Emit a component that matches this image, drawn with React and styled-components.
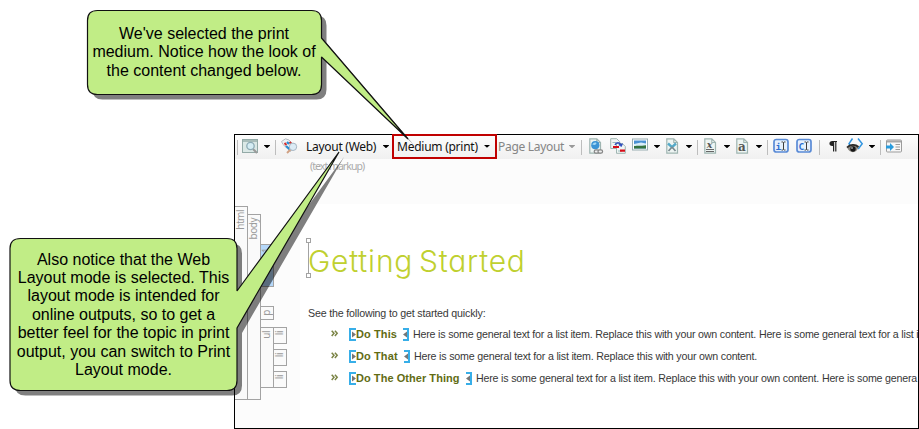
import React from "react";
import styled, { createGlobalStyle } from "styled-components";

const Global = createGlobalStyle`
  *{box-sizing:border-box}
  html,body{margin:0;padding:0;background:#fff;overflow:hidden}
`;

const Stage = styled.main`
  position: relative;
  width: 919px;
  height: 429px;
  padding: 134px 0 0 234px;
  overflow: hidden;
`;
const Editor = styled.section`
  display: flex;
  flex-direction: column;
  width: 685px;
  height: 295px;
  border: 1px solid #000;
  background: #fcfcfc;
`;
const Toolbar = styled.header`
  display: flex;
  align-items: center;
  flex: none;
  height: 24px;
  background: linear-gradient(#fdfdfd, #f0f0f0);
  font: 12px "Noto Sans", "Open Sans", sans-serif;
  color: #111;
`;
const Slot = styled.span`
  display: flex;
  flex: none;
  align-items: center;
  margin-left: ${(p) => p.$gap || 0}px;
  width: ${(p) => p.$w}px;
  height: 18px;
  padding-bottom: 2px;
  white-space: nowrap;
`;
const Label = styled(Slot)`
  height: 20px;
  padding-bottom: ${(p) => p.$drop ?? 2}px;
  letter-spacing: ${(p) => p.$track || 0}px;
  color: ${(p) => (p.$muted ? "#858585" : "#111")};
`;
const Separator = styled.i`
  flex: none;
  width: 1px;
  height: 15px;
  margin-left: ${(p) => p.$gap}px;
  background: #bdbdbd;
`;
const Caret = styled.i`
  flex: none;
  width: 6px;
  height: 3px;
  margin: -1px -1px 0 ${(p) => p.$gap}px;
  background: ${(p) => (p.$muted ? "#999" : "#000")};
  clip-path: polygon(0 0, 100% 0, 100% 20%, 55% 100%, 45% 100%, 0 20%);
`;
const Highlighted = styled.span`
  display: flex;
  flex: none;
  align-items: center;
  align-self: flex-start;
  width: 105px;
  height: 25px;
  margin: -1px 0 0 4px;
  padding-left: 3px;
  border: 2px solid #c00000;
`;
const Workspace = styled.div`
  display: flex;
  flex: 1;
  min-height: 0;
`;
const Gutter = styled.aside`
  display: flex;
  flex: none;
  align-items: flex-start;
  width: 65px;
  padding-top: 47px;
  font: 10px "Noto Sans", "Open Sans", sans-serif;
  letter-spacing: -0.5px;
  color: #999;
`;
const Tag = styled.div`
  display: flex;
  flex: none;
  justify-content: flex-start;
  width: ${(p) => p.$w || 14}px;
  height: ${(p) => p.$h}px;
  margin-top: ${(p) => p.$top || 0}px;
  margin-left: ${(p) => (p.$first ? 0 : -1)}px;
  padding-top: ${(p) => p.$pad ?? 3}px;
  border: 1px solid #a3a3a3;
  border-left-width: ${(p) => (p.$first ? 0 : 1)}px;
  background: ${(p) => (p.$active ? "#b5d8fa" : "#fafafa")};
  line-height: 11px;
  span {
    writing-mode: vertical-rl;
    transform: rotate(180deg);
    height: max-content;
  }
`;
const TagColumn = styled.div`
  display: flex;
  flex-direction: column;
  flex: none;
  padding-top: ${(p) => p.$top || 0}px;
`;
const TagRow = styled.div`
  display: flex;
  align-items: flex-start;
  margin-top: ${(p) => p.$top || 0}px;
`;
const Document = styled.div`
  display: flex;
  flex-direction: column;
  flex: 1;
  min-width: 0;
`;
const MarkupNote = styled.div`
  flex: none;
  height: 45px;
  padding: 0 0 0 10px;
  font: 10.5px/14px "Noto Sans", "Open Sans", sans-serif;
  letter-spacing: -0.95px;
  color: #aaa;
`;
const Page = styled.article`
  flex: 1;
  min-height: 0;
  overflow: hidden;
  padding: 33px 0 0 5px;
  background: #fff;
  font: 10.67px/22px "Liberation Sans", Arial, sans-serif;
  color: #383838;
`;
const TitleRow = styled.div`
  display: flex;
  height: 41px;
`;
const Title = styled.h1`
  margin: 0 0 0 -4px;
  font: 300 30px/48px Inter, sans-serif;
  font-feature-settings: "cv11", "ss03";
  letter-spacing: 0.8px;
  word-spacing: -3.5px;
  color: #bfd02f;
  white-space: nowrap;
`;
const Intro = styled.p`
  margin: 24px 0 0 3px;
  letter-spacing: -0.18px;
  white-space: nowrap;
`;
const List = styled.ul`
  margin: -1px 0 0;
  padding: 0 0 0 26px;
  list-style: none;
`;
const Item = styled.li`
  display: flex;
  align-items: center;
  height: 22px;
  white-space: nowrap;
`;
const Bullet = styled.span`
  display: flex;
  align-items: center;
  flex: none;
  width: 18px;
  height: 22px;
  padding-bottom: 2px;
`;
const Term = styled.b`
  flex: none;
  width: ${(p) => p.$w}px;
  font-size: 11px;
  letter-spacing: ${(p) => p.$track}px;
  color: #626c14;
`;
const Copy = styled.span`
  margin-left: 3px;
  letter-spacing: -0.195px;
`;
const Callout = styled.div`
  position: absolute;
  left: ${(p) => p.$x}px;
  top: ${(p) => p.$y}px;
  display: flex;
  flex-direction: column;
  align-items: center;
  width: ${(p) => p.$w}px;
  font: 16px/18.4px "Liberation Sans", Arial, sans-serif;
  color: #000;
  white-space: nowrap;
`;
const Shapes = styled.svg`
  position: absolute;
  inset: 0;
`;
const Glyph = styled.svg`
  display: block;
  flex: none;
  overflow: visible;
`;

const Icon = ({ w = 16, children }) => (
  <Glyph width={w} height="16" viewBox={`0 0 ${w} 16`} fill="none">
    {children}
  </Glyph>
);
const Sheet = () => (
  <path d="M.8.8h7l3.7 3.7v10.7H.8zM7.8.8v3.7h3.7" fill="#eef5f3" stroke="#9fb5b1" strokeWidth="1.2" />
);
const PreviewIcon = () => (
  <Icon>
    <rect x=".5" y="1.5" width="15" height="13" fill="#dbe8e6" stroke="#93aaa7" />
    <path d="M1 3h14" stroke="#a9bdba" strokeWidth="2" />
    <path d="m11 11 4 4" stroke="#9a9a9a" strokeWidth="2" />
    <circle cx="8.5" cy="8" r="3.7" fill="#d5edf4" stroke="#8eabb5" strokeWidth="1.3" />
  </Icon>
);
const TagSearchIcon = () => (
  <Icon>
    <path d="M.5 3.5 4.500.8 8 2l6 6-4.500 5.500L2 6.500z" fill="#edf1f4" stroke="#b7bdc3" />
    <path d="m3.500 5 2 2M8.500 4l2 2" stroke="#d42c2c" strokeWidth="2" />
    <path d="m6 4 2 2M5 8l4 3.500" stroke="#268bd2" strokeWidth="2.200" />
    <path d="m9.500 11.500-3.500 3.500" stroke="#d0a184" strokeWidth="2" />
    <circle cx="12" cy="8.800" r="3.700" fill="#dcebf5" stroke="#a6b6c3" />
  </Icon>
);
const LinkIcon = () => (
  <Icon w={14}>
    <Sheet />
    <circle cx="6.3" cy="7.2" r="4.1" fill="#3c94d5" />
    <path d="M3.3 6.5c1-2 3-2.6 4-1.6.6 1-.8 1.6-2 2.2z" fill="#a3d8f5" />
    <g stroke="#858585" strokeWidth="1.2" fill="#eee">
      <rect x="5.2" y="11.8" width="4.6" height="3.4" rx="1.7" />
      <rect x="9" y="11.8" width="4.6" height="3.4" rx="1.7" />
    </g>
  </Icon>
);
const CrossRefIcon = () => (
  <Icon>
    <path d="M.7.7h6l3 3v6.8h-9z" fill="#f1f6f5" stroke="#9fb5b1" />
    <path d="M6.5 5.5h5.8l3 3v6.8H6.5z" fill="#f1f6f5" stroke="#9fb5b1" />
    <path d="M2.5 4.5h4M8 13h4" stroke="#9bb" />
    <path d="M3 9h6M10 12.7h5" stroke="#d80d19" strokeWidth="2.2" />
    <path d="M5 7c1-3 5-3 6 0m-2.2-.5L11.2 8l1.3-2.5" stroke="#304fbd" strokeWidth="1.3" />
  </Icon>
);
const PictureIcon = () => (
  <Icon>
    <rect x=".5" y="1" width="15" height="11" fill="#fff" stroke="#9aaeb2" />
    <path d="M2 2.5h12v8H2z" fill="#4a91d3" />
    <path d="M2 6 9 4.5l5 1V8H2z" fill="#d8edf8" />
    <path d="M2 8c4-.5 6 0 12-.8v3.300H2z" fill="#35733f" />
  </Icon>
);
const SnippetIcon = () => (
  <Icon w={12}>
    <Sheet />
    <path d="m2 5.5 4 3.7 4-3.7" stroke="#54a9c8" strokeWidth="2.4" />
    <path d="m6 9-3.5 4M6 9l3.5 4" stroke="#7d8b90" strokeWidth="1.7" />
  </Icon>
);
const SheetLetterIcon = ({ letter, underlined }) => (
  <Icon w={12}>
    <Sheet />
    <text
      x={underlined ? 5.5 : 6} y={underlined ? 9.6 : 12.7} textAnchor="middle" fill="#555"
      fontFamily="DejaVu Serif, serif" fontWeight="bold"
      fontStyle={underlined ? "italic" : "normal"} fontSize={underlined ? 9.5 : 12}
    >
      {letter}
    </text>
    {underlined && <path d="M2 11.5h8M2 13.5h8" stroke="#666" />}
  </Icon>
);
const CursorIcon = ({ letter }) => (
  <Icon>
    <rect x="1" y="1.5" width="14" height="12.5" rx="2.3" fill="#e6f0fc" stroke="#5a8bd6" strokeWidth="1.7" />
    <text x="5.4" y="11.6" textAnchor="middle" fill="#2f6fd0" fontFamily="DejaVu Sans Mono, monospace" fontWeight="bold" fontSize="9.5">
      {letter}
    </text>
    <path d="M8.5 4h1.3l.7.5.7-.5h1.3m-2 .5v7m-2 .5h1.3l.7-.5.7.5h1.3" stroke="#3c3c3c" />
  </Icon>
);
const PilcrowIcon = () => (
  <Icon w={8}>
    <path d="M8 3H3.3C-.5 3-.5 8 3.3 8H4v5.500h1.200V4h1v9.500h1.200V4H8z" fill="#222" />
  </Icon>
);
const EyeIcon = () => (
  <Icon>
    <path d="M5.5.5 2 5.700l1.500 2M11 .5l4.200 5.200-4 5.300" stroke="#3195e0" strokeWidth="1.5" />
    <path d="M0 9.5c3-4 8.500-4 11.500-.5-2 7-9 6.500-11.500.5" fill="#8b8881" />
    <path d="M0 9.5c3-3.500 8.500-3.500 11.500-.5" stroke="#2b2926" strokeWidth="1.8" />
    <circle cx="6" cy="11" r="2.7" fill="#171717" />
    <circle cx="5" cy="10" r=".8" fill="#eee" />
  </Icon>
);
const PanelIcon = () => (
  <Icon>
    <rect x=".5" y="2" width="15" height="12" rx="1" fill="#f7f7f7" stroke="#9b9b9b" />
    <path d="M1 3.5h14" stroke="#a7a7a7" strokeWidth="2" />
    <path d="M0 7.500h4V5l4 4-4 4v-2.500H0z" fill="#289bdd" />
    <path d="M9.5 6.500H14M9.500 9H14M9.500 11.500H14" stroke="#999" />
  </Icon>
);
const TitleHandle = () => (
  <Glyph width="7" height="41" viewBox="0 0 7 41" fill="#fff" stroke="#a3a3a3">
    <path d="M3.5 4v33" />
    <rect x="1.5" y="1.5" width="4" height="4" />
    <rect x="1.5" y="36.5" width="4" height="4" />
  </Glyph>
);
const Bracket = ({ end }) => (
  <Glyph width="7" height="14" viewBox="0 0 7 14" fill="none">
    <path d={end ? "M0 2h5v11H0" : "M7 2H1v11h6"} stroke="#37aee8" strokeWidth="2" />
    <path d={end ? "M4 4.500v6L0 7.500z" : "M3 4.500v6l4-3z"} fill="#777" />
  </Glyph>
);
const BulletMark = () => (
  <Glyph width="7" height="7" viewBox="0 0 7 7" fill="none" stroke="#7b8445" strokeWidth="1.5">
    <path d="m.7.7 2.300 2.600L.7 6M3.900.7l2.300 2.600L3.900 6" />
  </Glyph>
);

const base = "Here is some general text for a list item. Replace this with your own content.";
const items = [
  { term: "Do This", w: 47, track: 0.1, text: `${base} Here is some general text for a list i` },
  { term: "Do That", w: 48, track: 0.1, text: base },
  { term: "Do The Other Thing", w: 110, track: 0.05, text: `${base} Here is some genera` },
];
const callouts = [
  {
    x: 87, y: 25, w: 234,
    path: "M97.5 10.5H311.5Q321.5 10.5 321.5 20.5V38L408 139 321.5 57V84.5Q321.5 94.5 311.5 94.5H97.5Q87.5 94.5 87.5 84.5V20.5Q87.5 10.5 97.5 10.5Z",
    lines: ["We've selected the print", "medium. Notice how the look of", "the content changed below."],
  },
  {
    x: 10, y: 250.5, w: 227,
    path: "M20.5 238.5H227Q237 238.5 237 248.5V291L339 152 237 328V380.5Q237 390.5 227 390.5H20.5Q10 390.5 10 380.5V248.5Q10 238.5 20.5 238.5Z",
    lines: [
      "Also notice that the Web", "Layout mode is selected. This", "layout mode is intended for",
      "online outputs, so to get a", "better feel for the topic in print", "output, you can switch to Print",
      "Layout mode.",
    ],
  },
];

export default function App() {
  return (
    <Stage>
      <Global />
      <Editor>
        <Toolbar>
          <Separator $gap={2} />
          <Slot $gap={4} $w={16}><PreviewIcon /></Slot>
          <Caret $gap={6} />
          <Separator $gap={6} />
          <Slot $gap={5} $w={16}><TagSearchIcon /></Slot>
          <Label $gap={9} $w={71} $track={-0.28}>Layout (Web)</Label>
          <Caret $gap={6} />
          <Highlighted>
            <Label $w={82} $track={-0.25} $drop={0}>Medium (print)</Label>
            <Caret $gap={5} />
          </Highlighted>
          <Label $gap={1} $w={66} $track={-0.3} $muted>Page Layout</Label>
          <Caret $gap={5} $muted />
          <Separator $gap={7} />
          <Slot $gap={7} $w={14}><LinkIcon /></Slot>
          <Slot $gap={7} $w={16}><CrossRefIcon /></Slot>
          <Slot $gap={6} $w={16}><PictureIcon /></Slot>
          <Caret $gap={6} />
          <Slot $gap={7} $w={12}><SnippetIcon /></Slot>
          <Caret $gap={8} />
          <Separator $gap={6} />
          <Slot $gap={6} $w={12}><SheetLetterIcon letter="x" underlined /></Slot>
          <Caret $gap={8} />
          <Slot $gap={7} $w={12}><SheetLetterIcon letter="a" /></Slot>
          <Caret $gap={8} />
          <Separator $gap={6} />
          <Slot $gap={5} $w={16}><CursorIcon letter="i" /></Slot>
          <Slot $gap={7} $w={16}><CursorIcon letter="C" /></Slot>
          <Separator $gap={7} />
          <Slot $gap={9} $w={8}><PilcrowIcon /></Slot>
          <Slot $gap={10} $w={16}><EyeIcon /></Slot>
          <Caret $gap={6} />
          <Separator $gap={6} />
          <Slot $gap={5} $w={16}><PanelIcon /></Slot>
        </Toolbar>
        <Workspace>
          <Gutter>
            <Tag $first $w={13} $h={194}><span>html</span></Tag>
            <Tag $h={186} $top={8}><span>body</span></Tag>
            <TagColumn $top={38}>
              <Tag $h={43} $active><span>h1</span></Tag>
              <TagRow $top={19}><Tag $h={14}><span>p</span></Tag></TagRow>
              <TagRow $top={7}>
                <Tag $h={61}><span>ul</span></Tag>
                <TagColumn>
                  <Tag $h={17}><span>li</span></Tag>
                  <Tag $h={17} $top={5}><span>li</span></Tag>
                  <Tag $h={17} $top={5}><span>li</span></Tag>
                </TagColumn>
              </TagRow>
            </TagColumn>
          </Gutter>
          <Document>
            <MarkupNote>(text markup)</MarkupNote>
            <Page>
              <TitleRow>
                <TitleHandle />
                <Title>Getting Started</Title>
              </TitleRow>
              <Intro>See the following to get started quickly:</Intro>
              <List>
                {items.map((item) => (
                  <Item key={item.term}>
                    <Bullet><BulletMark /></Bullet>
                    <Bracket />
                    <Term $w={item.w} $track={item.track}>{item.term}</Term>
                    <Bracket end />
                    <Copy>{item.text}</Copy>
                  </Item>
                ))}
              </List>
            </Page>
          </Document>
        </Workspace>
      </Editor>
      <Shapes width="919" height="429" viewBox="0 0 919 429">
        {callouts.map((c) => (
          <g key={c.x}>
            <path d={c.path} transform="translate(5 5)" fill="#000" fillOpacity=".5" />
            <path d={c.path} fill="#c1ed86" stroke="#111" strokeWidth="1.2" strokeLinejoin="bevel" />
          </g>
        ))}
      </Shapes>
      {callouts.map((c) => (
        <Callout key={c.x} $x={c.x} $y={c.y} $w={c.w}>
          {c.lines.map((line) => <span key={line}>{line}</span>)}
        </Callout>
      ))}
    </Stage>
  );
}
